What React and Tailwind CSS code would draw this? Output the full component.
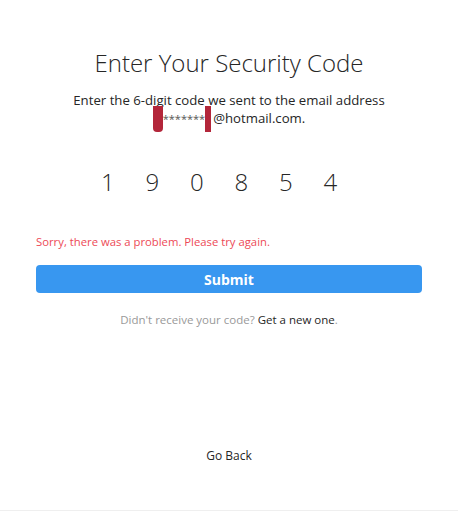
export default function App() {
  const digits = ["1", "9", "0", "8", "5", "4"];
  return (
    <div
      className="w-full h-[511px] bg-white border-b border-[#efefef] flex flex-col px-9 text-[#262626]"
      style={{ fontFamily: '"Open Sans", "Noto Sans", sans-serif' }}
    >
      <h1 className="mt-[46px] text-center text-[24px] font-light leading-[34px]">
        Enter Your Security Code
      </h1>
      <p className="mt-[11px] text-center text-[13.2px] leading-[18px]">
        Enter the 6-digit code we sent to the email address
        <br />
        <span className="inline-block align-middle -my-[6px] w-[10px] h-[26px] bg-[#b3263a] rounded-b-[4px]"></span>
        <span className="text-[11px] text-[#555]">*******</span>
        <span className="inline-block align-middle -my-[6px] w-[6px] h-[26px] bg-[#b3263a] mr-[2px]"></span>
        @hotmail.com.
      </p>
      <div className="mt-[39px] flex justify-center pr-[20px]">
        {digits.map((d, i) => (
          <div key={i} className="w-[44.5px] text-center text-[24px] font-light leading-[30px]">
            {d}
          </div>
        ))}
      </div>
      <p className="mt-[37px] text-[11.3px] leading-[16px] text-[#ed4956]">
        Sorry, there was a problem. Please try again.
      </p>
      <button className="mt-[15px] h-[28px] w-full rounded-[4px] bg-[#3897f0] text-white text-[14px] font-bold">
        Submit
      </button>
      <p className="mt-[19px] text-center text-[11.5px] leading-[16px] text-[#999]">
        Didn't receive your code?{" "}
        <span className="text-[#262626] font-medium">Get a new one</span>.
      </p>
      <div className="mt-auto mb-[46px] text-center text-[12px] leading-[16px] font-medium">
        Go Back
      </div>
    </div>
  );
}
